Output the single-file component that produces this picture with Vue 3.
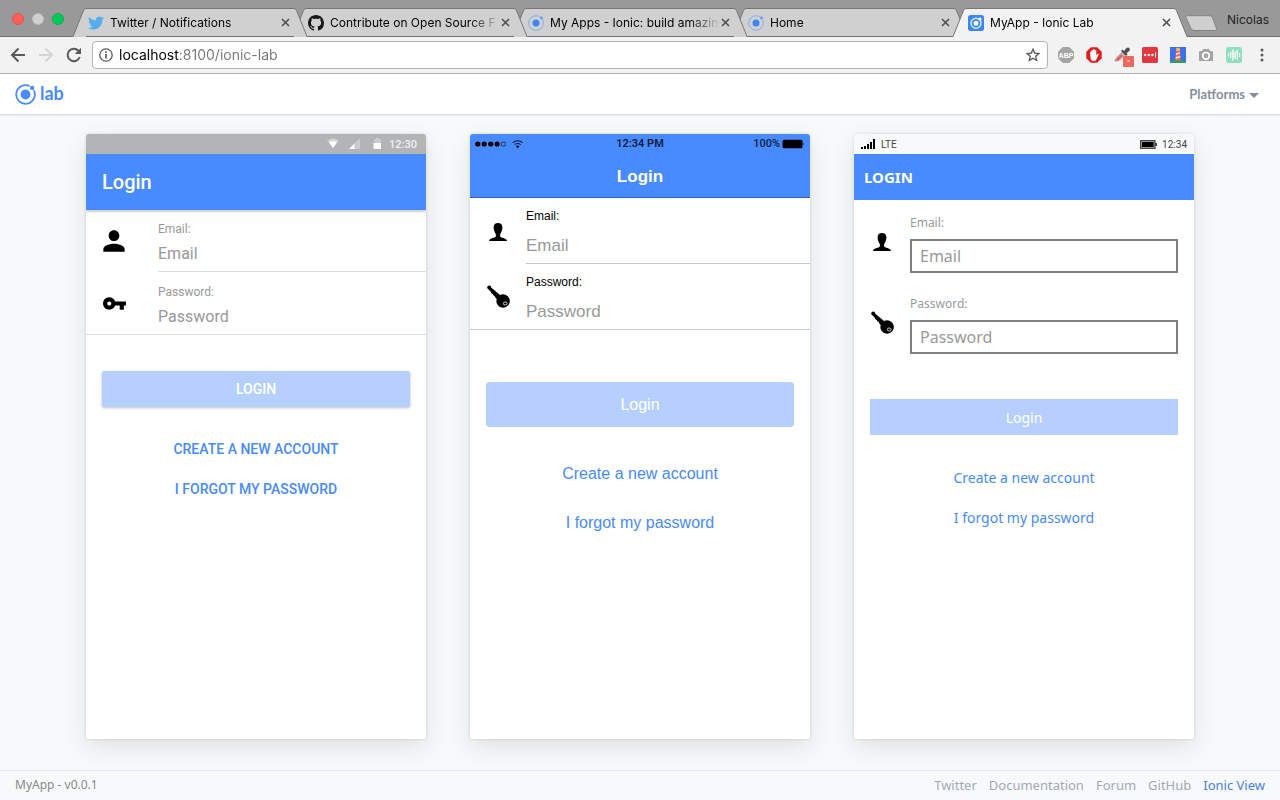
<script setup>
import { ref } from 'vue'

const tabs = [
  { title: 'Twitter / Notifications', icon: 'twitter' },
  { title: 'Contribute on Open Source F', icon: 'github' },
  { title: 'My Apps - Ionic: build amazin', icon: 'ionic' },
  { title: 'Home', icon: 'ionic' },
  { title: 'MyApp - Ionic Lab', icon: 'lab', active: true }
]

const url = ref('localhost:8100/ionic-lab')

const phones = [
  { id: 'md', title: 'Login', time: '12:30' },
  { id: 'ios', title: 'Login', time: '12:34 PM' },
  { id: 'wp', title: 'Login', time: '12:34' }
]

const fields = [
  { id: 'email', label: 'Email:', placeholder: 'Email', type: 'email' },
  { id: 'password', label: 'Password:', placeholder: 'Password', type: 'password' }
]

const links = ['Twitter', 'Documentation', 'Forum', 'GitHub', 'Ionic View']
</script>

<template>
  <div class="page">
    <div class="strip">
      <div class="lights"><i class="red"></i><i class="grey"></i><i class="green"></i></div>
      <div class="tabs">
        <div v-for="(tab, i) in tabs" :key="i" class="tab" :class="['t' + i, { active: tab.active }]">
          <svg class="cap" width="13" height="29" viewBox="0 0 13 29"><path class="fill" d="M0 29 L10.500 2.500Q11.500 .5 13 .5V29z" /><path class="line" d="M0 28.500 L10.500 2.500Q11.500 .5 13 .5" /></svg>
          <div class="tab-body">
            <svg v-if="tab.icon === 'twitter'" class="fav" viewBox="0 0 24 24"><path fill="#55acee" d="M23.953 4.57a10 10 0 01-2.825.775 4.958 4.958 0 002.163-2.723c-.951.555-2.005.959-3.127 1.184a4.92 4.92 0 00-8.384 4.482C7.69 8.095 4.067 6.13 1.64 3.162a4.822 4.822 0 00-.666 2.475c0 1.71.87 3.213 2.188 4.096a4.904 4.904 0 01-2.228-.616v.06a4.923 4.923 0 003.946 4.827 4.996 4.996 0 01-2.212.085 4.936 4.936 0 004.604 3.417 9.867 9.867 0 01-6.102 2.105c-.39 0-.779-.023-1.17-.067a13.995 13.995 0 007.557 2.209c9.053 0 13.998-7.496 13.998-13.985 0-.21 0-.42-.015-.63A9.935 9.935 0 0024 4.59z" /></svg>
            <svg v-else-if="tab.icon === 'github'" class="fav" viewBox="0 0 16 16"><path fill="#181616" d="M8 0C3.580 0 0 3.580 0 8c0 3.540 2.290 6.530 5.470 7.590.4.070.55-.17.55-.38 0-.19-.01-.82-.01-1.490-2.010.370-2.530-.49-2.690-.94-.09-.23-.48-.94-.82-1.130-.28-.15-.68-.52-.01-.53.63-.01 1.080.580 1.230.820.720 1.210 1.870.870 2.330.660.070-.52.280-.87.510-1.070-1.780-.2-3.640-.89-3.640-3.950 0-.87.310-1.590.820-2.150-.08-.2-.36-1.020.080-2.120 0 0 .67-.21 2.200.820.640-.18 1.320-.27 2-.27s1.360.090 2 .27c1.530-1.040 2.200-.82 2.200-.82.440 1.100.160 1.920.080 2.120.510.560.820 1.270.820 2.150 0 3.070-1.870 3.750-3.650 3.950.290.250.540.730.540 1.480 0 1.070-.01 1.930-.01 2.200 0 .21.150.460.550.380A8.010 8.010 0 0016 8c0-4.420-3.580-8-8-8z" /></svg>
            <svg v-else-if="tab.icon === 'ionic'" class="fav" viewBox="0 0 16 16"><circle cx="8" cy="8" r="7.300" fill="none" stroke="#82aeee" /><circle cx="8" cy="8" r="3.500" fill="#3f85f7" /><circle cx="13.500" cy="2.800" r="1.500" fill="#6ea3f2" /></svg>
            <svg v-else class="fav" viewBox="0 0 16 16"><rect width="16" height="16" rx="2.500" fill="#3b86f7" /><circle cx="8" cy="8.300" r="5" fill="none" stroke="#d5e6ff" stroke-width="1.500" /><circle cx="8" cy="8.300" r="2.500" fill="#fff" /><circle cx="12" cy="4" r="1.500" fill="#fff" /></svg>
            <span class="tab-title">{{ tab.title }}</span>
            <button class="close" type="button" :aria-label="'Close ' + tab.title"><svg width="9" height="9" viewBox="0 0 9 9"><path d="M1 1l7 7M8 1l-7 7" stroke="#505050" stroke-width="1.600" /></svg></button>
          </div>
          <svg class="cap" width="13" height="29" viewBox="0 0 13 29"><path class="fill" d="M13 29 L2.500 2.500Q1.500 .5 0 .5V29z" /><path class="line" d="M13 28.500 L2.500 2.500Q1.500 .5 0 .5" /></svg>
        </div>
      </div>
      <button class="new-tab" type="button" aria-label="New tab"><svg width="34" height="17" viewBox="0 0 34 17"><path d="M3 .7h22.500q2 0 3 2l4 10.800q.5 2-1.500 2H10q-2 0-3-2L2 2.700Q1 .7 3 .7z" fill="#cfcfcf" stroke="#858585" /></svg></button>
      <span class="profile">Nicolas</span>
    </div>

    <div class="toolbar">
      <button type="button" aria-label="Back"><svg width="16" height="16" viewBox="0 0 16 16"><path d="M15 8H2M8.500 1.500L2 8l6.500 6.500" fill="none" stroke="#5a5a5a" stroke-width="2" /></svg></button>
      <button type="button" aria-label="Forward"><svg width="16" height="16" viewBox="0 0 16 16"><path d="M1 8h13M7.500 1.500L14 8l-6.500 6.500" fill="none" stroke="#d4d4d4" stroke-width="2" /></svg></button>
      <button type="button" aria-label="Reload"><svg width="16" height="16" viewBox="0 0 16 16"><path d="M13.700 10A6.200 6.200 0 1 1 12.400 3.700L14 5.500" fill="none" stroke="#5a5a5a" stroke-width="2" /><path d="M15 .8V7H8.800z" fill="#5a5a5a" /></svg></button>
      <div class="address">
        <svg width="14" height="14" viewBox="0 0 14 14"><circle cx="7" cy="7" r="6.200" fill="none" stroke="#5a5a5a" stroke-width="1.300" /><path d="M7 6v4.500M7 3.200v1.700" stroke="#5a5a5a" stroke-width="1.700" /></svg>
        <input v-model="url" type="text" aria-label="Address" />
        <button type="button" aria-label="Bookmark"><svg width="14" height="14" viewBox="0 0 14 14"><path d="M7 1.200l1.700 3.900 4.200.4-3.200 2.800 1 4.200L7 10.300l-3.700 2.200 1-4.200L1.100 5.500l4.200-.4z" fill="none" stroke="#555" stroke-width="1.300" /></svg></button>
      </div>
      <div class="extensions">
        <button type="button" aria-label="Adblock Plus"><svg width="16" height="16" viewBox="0 0 16 16"><path d="M4.800 0h6.400L16 4.800v6.400L11.200 16H4.800L0 11.200V4.800z" fill="#a5a5a5" /><text x="8" y="11" text-anchor="middle" font-size="7" font-weight="700" fill="#fff">ABP</text></svg></button>
        <button type="button" aria-label="Adblock"><svg width="16" height="16" viewBox="0 0 16 16"><path d="M4.800 .3h6.400L15.700 4.800v6.400L11.200 15.700H4.800L.3 11.200V4.800z" fill="#e11d1d" /><path d="M4.200 8V4.800q.7-.8 1.400 0V3.300q.8-.8 1.500 0V2.400q.8-.8 1.700 0v1q.8-.7 1.500.1v4.800l1.400-1.500q1-.4 1.200.4L10.300 12.500q-.7 1.500-2.500 1.500-2.200 0-2.900-1.500z" fill="#fff" /></svg></button>
        <button type="button" aria-label="Colour picker"><svg width="20" height="20" viewBox="0 0 20 20"><path d="M1 14l1.500-3L8 5.500 10.500 8 5 13.500z" fill="#cfcaca" stroke="#a66" stroke-width=".8" /><path d="M3 13l5-5" stroke="#df5a4e" stroke-width="2" /><path d="M7 4l1.500-1.500L10 4l2.500-3q1.800-1 3 .3 1 1.300-.2 2.700l-2.800 2.300 1.200 1.200L12 9z" fill="#4c5054" /><rect x="9" y="9" width="11" height="11" rx="1" fill="#ec695f" /><path d="M13 13.500h3L14.500 15z" fill="#fff" /></svg></button>
        <button type="button" aria-label="Passwords"><svg width="16" height="16" viewBox="0 0 16 16"><rect width="16" height="16" rx="1.500" fill="#e03a40" /><circle cx="3.200" cy="8" r="1.200" fill="#fff" /><circle cx="6.800" cy="8" r="1.200" fill="#fff" /><circle cx="10.400" cy="8" r="1.200" fill="#fff" /><path d="M13.500 5.500v5" stroke="#fff" /></svg></button>
        <button type="button" aria-label="Lighthouse"><svg width="16" height="16" viewBox="0 0 16 16"><path fill="#3f6fe9" d="M0 0h16v16H0z" /><path d="M6.200 4h3.600l.8 10H5.400z" fill="#ef694c" /><path d="M6 1.500L8 .5l2 1V4H6z" fill="#f8b65e" /><path d="M6 6.200l4-1v1.600l-4.200 1.200zM5.700 10l4.600-1.200v1.600L5.600 12z" fill="#ffe0c4" /><path d="M0 14.500q8-2 16 0V16H0z" fill="#2da555" /></svg></button>
        <button type="button" aria-label="Screenshot"><svg width="16" height="16" viewBox="0 0 16 16"><path d="M5 2h6l1 2h2q1 0 1 1v9H1V5q0-1 1-1h2z" fill="#a5a5a5" /><circle cx="8" cy="8.800" r="3.300" fill="none" stroke="#fff" stroke-width="1.700" /></svg></button>
        <button type="button" aria-label="Recorder"><svg width="16" height="16" viewBox="0 0 16 16"><rect width="16" height="16" rx="3" fill="#8ce0bd" /><path d="M2.500 7v2M4.700 5.500v5M6.900 3v10M9.100 5v6M11.300 3.500v8.500M13.500 6.500v3" stroke="#fff" stroke-width="1.400" stroke-linecap="round" /></svg></button>
        <button type="button" aria-label="Menu"><svg width="16" height="16" viewBox="0 0 16 16"><circle cx="8" cy="3" r="1.500" fill="#5a5a5a" /><circle cx="8" cy="8" r="1.500" fill="#5a5a5a" /><circle cx="8" cy="13" r="1.500" fill="#5a5a5a" /></svg></button>
      </div>
    </div>

    <header class="lab-head">
      <a href="#" class="brand">
        <svg width="21" height="21" viewBox="0 0 21 21"><circle cx="10.500" cy="10.500" r="4.900" fill="#488aff" /><path d="M14.600 2.100A9.300 9.300 0 1 0 18.900 6.400" fill="none" stroke="#488aff" stroke-width="1.800" /><circle cx="17.200" cy="3.900" r="2.200" fill="#488aff" /></svg>
        <span>lab</span>
      </a>
      <button type="button" class="platforms">Platforms <i></i></button>
    </header>

    <main>
      <section v-for="p in phones" :key="p.id" class="phone" :class="p.id">
        <div class="status">
          <template v-if="p.id === 'md'">
            <svg width="56" height="12" viewBox="0 0 56 12"><path d="M0 2.500Q6-1.500 12 2.500L6 10z" fill="#d0d1d2" /><path d="M2 4q4-2 8 0l-4 6z" fill="#fff" /><path d="M33 0v11H22z" fill="#c9cacb" /><path d="M27.500 5.500V11H22z" fill="#fff" /><path d="M47 1h2V0h3v1h2v5h-7z" fill="#cbcccd" /><path d="M46.500 5h7.500v6h-7.500z" fill="#fff" /></svg>
            <span>{{ p.time }}</span>
          </template>
          <template v-else-if="p.id === 'ios'">
            <svg width="54" height="10" viewBox="0 0 54 10"><circle cx="2.800" cy="5" r="2.600" /><circle cx="9.200" cy="5" r="2.600" /><circle cx="15.700" cy="5" r="2.600" /><circle cx="22.100" cy="5" r="2.600" /><circle cx="28.500" cy="5" r="2.200" fill="none" stroke="#000" stroke-width=".6" /><path d="M37.700 3.600q5-3.600 10 0M39.600 5.600q3.100-2.200 6.200 0" fill="none" stroke="#0a1c40" stroke-width="1.100" /><path d="M40.900 7.100q1.800-1.300 3.600 0l-1.800 2.100z" /></svg>
            <span>{{ p.time }}</span>
            <span class="charge">100% <svg width="23" height="10" viewBox="0 0 23 10"><rect x=".5" y=".8" width="20" height="8.400" rx="1.500" /><path d="M21.300 3.500q1.500 1.500 0 3z" /></svg></span>
          </template>
          <template v-else>
            <svg width="14" height="10" viewBox="0 0 14 10"><path d="M0 8h2v2H0zM3 7h2v3H3zM6 5h2v5H6zM9 3h2v7H9zM12 0h2v10h-2z" /></svg>
            <span class="carrier">LTE</span>
            <svg width="17" height="9" viewBox="0 0 17 9"><rect x=".6" y=".6" width="14.400" height="7.800" fill="#aaa" stroke="#444" stroke-width="1.200" /><path d="M2 2h11.600v5H2zM15.500 3h1.200v3h-1.200z" /></svg>
            <span>{{ p.time }}</span>
          </template>
        </div>
        <div class="title"><h1>{{ p.title }}</h1></div>
        <form @submit.prevent>
          <div v-for="f in fields" :key="f.id" class="item">
            <div class="icon">
              <svg v-if="p.id === 'md' && f.id === 'email'" width="32" height="32" viewBox="0 0 24 24"><path d="M12 12c2.210 0 4-1.790 4-4s-1.790-4-4-4-4 1.790-4 4 1.790 4 4 4zm0 2c-2.670 0-8 1.340-8 4v2h16v-2c0-2.660-5.330-4-8-4z" /></svg>
              <svg v-else-if="p.id === 'md'" width="25" height="25" viewBox="0 0 24 24"><path d="M12.650 10C11.830 7.670 9.610 6 7 6c-3.310 0-6 2.690-6 6s2.690 6 6 6c2.610 0 4.830-1.670 5.650-4H17v4h4v-4h2v-4H12.650zM7 14c-1.100 0-2-.9-2-2s.9-2 2-2 2 .9 2 2-.9 2-2 2z" /></svg>
              <svg v-else-if="f.id === 'email'" width="18" height="18" viewBox="0 0 18 18"><path d="M9 0C6.300 0 4.600 1.600 4.600 4.200c0 2.600 1 5 1.900 6.200.5.800.6 2.600.1 3.300C6 14.700 1 15.200.3 17c-.1.4-.2.7-.2 1h17.800c0-.3-.1-.6-.2-1-.7-1.800-5.700-2.300-6.300-3.300-.5-.7-.4-2.500.1-3.300.9-1.200 1.900-3.600 1.900-6.200C13.400 1.600 11.700 0 9 0z" /></svg>
              <svg v-else width="24" height="24" viewBox="-1 0 24 24"><path d="M.7 1.200Q2 0 3.600 1l.8 1.800 8.600 7.300a6.700 6.700 0 1 1-3.300 4L8.200 12.300 7.700 11 6.300 10.300 5.800 9 4.300 8.300 3.600 6.600.5 3.400Q-.2 2.100.7 1.200z" /><ellipse cx="18.200" cy="18.500" rx="1.900" ry="1.500" fill="none" stroke="#fff" stroke-width=".8" /></svg>
            </div>
            <div class="inner">
              <label :for="p.id + '-' + f.id">{{ f.label }}</label>
              <input :id="p.id + '-' + f.id" :type="f.type" :placeholder="f.placeholder" />
            </div>
          </div>
          <div class="actions">
            <button type="submit" class="login" disabled>Login</button>
            <button type="button" class="clear">Create a new account</button>
            <button type="button" class="clear">I forgot my password</button>
          </div>
        </form>
      </section>
    </main>

    <footer>
      <span>MyApp - v0.0.1</span>
      <nav><a v-for="l in links" :key="l" href="#">{{ l }}</a></nav>
    </footer>
  </div>
</template>

<style>
body { margin: 0; }
</style>

<style scoped>
* { box-sizing: border-box; }
.page { min-height: 100vh; display: flex; flex-direction: column; background: #f8f9fb; font-family: "Noto Sans", sans-serif; }
button { border: 0; padding: 0; background: none; font: inherit; color: inherit; }
a { text-decoration: none; color: inherit; }
svg { display: block; flex: none; }

.strip { height: 37px; display: flex; align-items: flex-end; background: #999; border-bottom: 1px solid #6f6f6f; font-family: Inter, sans-serif; }
.lights { display: flex; gap: 8px; padding: 0 9px 11px 12px; }
.lights i { width: 12px; height: 12px; border-radius: 50%; }
.red { background: #ff5f57; border: 1px solid #e5504a; }
.grey { background: #d0d0d0; border: 1px solid #bbb; }
.green { background: #00ca56; border: 1px solid #0ab04c; }
.tabs { flex: 1; display: flex; margin-bottom: -1px; min-width: 0; }
.tab { flex: 1 1 0; display: flex; min-width: 0; height: 29px; position: relative; margin-right: -14px; }
.tab:last-child { margin-right: 0; }
.t0 { z-index: 4; }
.t1 { z-index: 3; }
.t2 { z-index: 2; }
.t3 { z-index: 1; }
.active { z-index: 5; }
.fill { fill: #d0d0d0; }
.active .fill { fill: #f2f2f2; }
.line { fill: none; stroke: #777; }
.tab-body { flex: 1; min-width: 0; display: flex; align-items: center; background: #d0d0d0; border-top: 1px solid #777; border-bottom: 1px solid #6f6f6f; padding: 0 4px 0 2px; font-size: 12px; color: #000; }
.active .tab-body { background: #f2f2f2; border-bottom-color: #f2f2f2; padding-right: 3px; }
.fav { width: 16px; height: 16px; margin-right: 6px; }
.tab-title { flex: 1; overflow: hidden; white-space: nowrap; mask-image: linear-gradient(to left, transparent, #000 32px); }
.close { margin-left: 0; }
.new-tab { margin: 0 0 4px -3px; }
.profile { font-size: 12px; color: #222; padding: 0 11px 9px 9px; }

.toolbar { height: 37px; display: flex; align-items: center; padding: 0 10px; background: #f2f2f2; border-bottom: 1px solid #b8b8b8; }
.toolbar > button { margin-right: 12px; }
.toolbar > button:nth-of-type(3) { margin-right: 10px; }
.address { flex: 1; height: 28px; display: flex; align-items: center; padding: 0 7px 0 6px; background: #fff; border: 1px solid #b4b4b4; border-radius: 4px; }
.address input { flex: 1; min-width: 0; margin: 0 0 0 6px; padding: 0 0 2px; border: 0; outline: 0; font-family: Inter, sans-serif; font-size: 14px; color: transparent; background: linear-gradient(to right, #000 60px, #777 60px) text; }
.extensions { display: flex; align-items: center; gap: 12px; margin-left: 10px; }
.extensions button:nth-child(3) { margin-right: -4px; margin-bottom: -4px; }
.extensions text { font-family: "Liberation Sans", sans-serif; }

.lab-head { height: 40px; display: flex; align-items: center; justify-content: space-between; padding: 0 21px 0 15px; background: #fff; box-shadow: 0 1px 2px rgba(0, 0, 0, .16); }
.brand { display: flex; align-items: center; gap: 4px; color: #488aff; font: 700 18px/20px Lato, sans-serif; }
.brand span { padding-bottom: 2px; }
.platforms { display: flex; align-items: center; gap: 4px; color: #868e9e; font: 700 13px/20px Lato, sans-serif; }
.platforms i { border: 5px solid transparent; border-top-color: #868e9e; border-bottom: 0; margin-top: 3px; }

main { flex: 1; display: flex; justify-content: center; gap: 44px; padding: 20px 20px 31px; }
.phone { flex: 0 1 340px; min-width: 0; display: flex; flex-direction: column; min-height: 560px; background: #fff; border-radius: 3px; overflow: hidden; box-shadow: 0 0 3px rgba(0, 0, 0, .14), 0 8px 24px rgba(0, 0, 0, .1); }
.status { height: 20px; display: flex; align-items: center; }
.title { display: flex; align-items: center; background: #488aff; color: #fff; }
h1 { margin: 0; }
.item { display: flex; }
.inner { flex: 1; min-width: 0; display: flex; flex-direction: column; }
.inner input { width: 100%; border: 0; padding: 0; margin: 0; background: none; outline: 0; font-family: inherit; font-size: 16px; }
input::placeholder { color: #999; opacity: 1; }
.icon { flex: none; display: flex; align-items: center; justify-content: center; }
.actions { display: flex; flex-direction: column; padding: 0 16px; gap: 4px; }
.login { background: #b5d0ff; color: #fff; margin-bottom: 20px; }
.clear { color: #488aff; }

.md { font-family: Roboto, sans-serif; }
.md .status { justify-content: flex-end; gap: 6px; padding-right: 9px; background: #b3b4b6; color: #f1f1f2; font-size: 11px; font-weight: 500; }
.md .title { height: 56px; padding: 0 16px; box-shadow: 0 2px 2px rgba(0, 0, 0, .2); }
.md h1 { font-size: 20px; font-weight: 500; }
.md .icon { width: 24px; margin: 0 32px 0 16px; }
.md .inner { height: 62px; padding-top: 11px; border-bottom: 1px solid #dedede; }
.md .item + .item { padding-top: 1px; border-bottom: 1px solid #dedede; }
.md .item + .item .inner { border: 0; height: 61px; }
.md label { font-size: 12px; line-height: 16px; color: #999; }
.md .inner input { height: 20px; margin-top: 6px; }
.md .actions { padding-top: 36px; font-size: 14px; font-weight: 500; }
.md .actions button { height: 36px; text-transform: uppercase; border-radius: 2px; }
.md .login { box-shadow: 0 1px 3px rgba(0, 0, 0, .25); }

.ios { font-family: "Liberation Sans", sans-serif; }
.ios .status { display: grid; grid-template-columns: 1fr auto 1fr; padding: 0 5px; background: #488aff; font: 600 11px/20px Roboto, sans-serif; color: #0b1c3d; }
.charge { display: flex; align-items: center; justify-content: flex-end; gap: 2px; font-weight: 500; }
.ios .title { height: 44px; padding-top: 2px; justify-content: center; border-bottom: 1px solid #2f62c0; }
.ios h1 { font-size: 17px; font-weight: 700; }
.ios .icon { width: 24px; margin: 0 16px; padding-top: 1px; }
.ios .inner { height: 66px; padding-top: 10px; border-bottom: 1px solid #c8c7cc; }
.ios .item + .item { border-bottom: 1px solid #c8c7cc; }
.ios .item + .item .inner { border: 0; height: 65px; }
.ios label { font-size: 12px; line-height: 16px; }
.ios .inner input { height: 20px; margin-top: 12px; font-size: 17px; }
.ios .actions { padding-top: 52px; font-size: 16px; }
.ios .actions button { height: 45px; border-radius: 4px; }

.wp .status { padding: 0 7px; background: #f8f9fb; font-family: Roboto, sans-serif; font-size: 10px; color: #444; }
.wp .carrier { margin: 0 auto 0 6px; }
.wp .status span:last-child { margin-left: 5px; }
.wp .title { height: 46px; padding: 0 10px; }
.wp h1 { font-size: 15px; font-weight: 700; text-transform: uppercase; }
.wp .icon { width: 24px; margin: 0 16px; padding-top: 2px; }
.wp .inner { height: 81px; padding: 15px 16px 0 0; }
.wp label { font-size: 12px; line-height: 16px; color: #999; }
.wp .inner input { height: 34px; margin-top: 8px; padding: 0 8px; border: 2px solid #808080; }
.wp .actions { padding-top: 37px; font-size: 14px; }
.wp .actions button { height: 36px; }

footer { height: 30px; display: flex; align-items: center; justify-content: space-between; padding: 0 15px 2px; border-top: 1px solid #e5e7ea; font: 12px/20px "Noto Sans", sans-serif; color: #888; }
nav { display: flex; gap: 12px; font-size: 13px; color: #a2a9b5; }
nav a:last-child { color: #4a7fe8; }
</style>
